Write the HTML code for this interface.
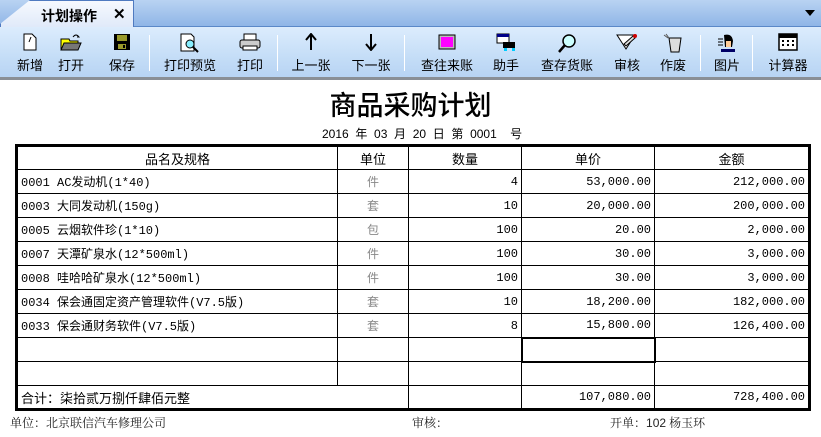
<!DOCTYPE html>
<html><head><meta charset="utf-8"><style>
*{margin:0;padding:0;box-sizing:border-box}
body{width:821px;height:437px;position:relative;background:#fff;overflow:hidden;font-family:"Liberation Sans","Noto Sans CJK SC",sans-serif}
.tabbar{position:absolute;left:0;top:0;width:821px;height:28px;background:linear-gradient(#b9d3f2,#8cb3e6)}
.tab{position:absolute;left:0;top:0;width:134px;height:28px;background:linear-gradient(#f6f9fe,#dfe9f9);border:1px solid #4f7ac0;border-bottom:none;clip-path:polygon(30px 0,100% 0,100% 100%,0 100%,0 24px)}
.tabline{position:absolute;left:133px;top:26px;width:688px;height:1px;background:#5b88c8}
.tabt{position:absolute;left:40px;top:5px;font-size:14px;font-weight:bold;color:#000}
.tabx{position:absolute;left:112px;top:4px;font-size:15px;font-weight:bold}
.tb{position:absolute;left:0;top:27px;width:821px;height:51px;background:linear-gradient(#dcecfd,#c4ddf7 60%,#b7d3f3)}
.tbb{position:absolute;left:0;top:77px;width:821px;height:3px;background:#8a8f96}
.it{position:absolute;top:55px;font-size:13px;color:#000;transform:translateX(-50%);white-space:nowrap}
.ic{position:absolute;top:33px;transform:translateX(-50%)}
.sep{position:absolute;top:35px;width:1px;height:36px;background:#8fb0d8;border-right:1px solid #fff}
.title{position:absolute;left:0;width:821px;top:84px;text-align:center;font-size:27px;font-weight:500;font-family:"Noto Sans CJK SC",sans-serif;color:#000}
.date{position:absolute;left:322px;top:125px;font-size:12px;word-spacing:0;white-space:pre}
table{position:absolute;left:15px;top:144px;border-collapse:collapse;border:3px solid #000;font-size:12px}
td{border:1px solid #000;height:24px;padding:0 3px;font-family:"Liberation Mono","Noto Sans CJK SC",monospace}
.h td{text-align:center;font-family:"Noto Sans CJK SC",sans-serif;font-size:13px}
.u{text-align:center;color:#888;font-family:"Noto Sans CJK SC",sans-serif!important}
.r{text-align:right}
.sel{border:2px solid #000}
.ft{position:absolute;top:414px;font-size:12px;color:#222;font-family:"Noto Serif CJK SC",serif}
</style></head><body>
<div class="tabbar"></div><div class="tabline"></div>
<div class="tab"><span class="tabt">计划操作</span><span class="tabx">✕</span></div>
<div style="position:absolute;left:805px;top:10px;width:0;height:0;border-left:5px solid transparent;border-right:5px solid transparent;border-top:6px solid #000"></div>
<div class="tb"></div><div class="tbb"></div>
<svg class="ic" style="left:30px" width="16" height="18"><path d="M2 1h8l4 4v12H2z" fill="#fff" stroke="#000"/><path d="M9 4l-2 5" stroke="#000"/></svg>
<svg class="ic" style="left:71px" width="22" height="18"><path d="M1 6h8l1 2h8v8H1z" fill="#ff0" stroke="#000"/><path d="M4 10h17l-3 7H1z" fill="#777" stroke="#000"/><path d="M13 4q3-4 6 0l-2 0" fill="none" stroke="#000"/></svg>
<svg class="ic" style="left:122px" width="18" height="18"><rect x="1" y="1" width="16" height="16" fill="#000"/><rect x="4" y="2" width="10" height="6" fill="#99992a"/><rect x="5" y="11" width="8" height="5" fill="#99992a"/><rect x="10" y="12" width="2" height="3" fill="#000"/></svg>
<div class="sep" style="left:149px"></div>
<svg class="ic" style="left:190px" width="20" height="20"><path d="M1 1h10l3 3v14H1z" fill="#fff" stroke="#000"/><circle cx="10" cy="11" r="4" fill="#8ef" stroke="#000"/><path d="M13 14l5 5" stroke="#000" stroke-width="2"/></svg>
<svg class="ic" style="left:250px" width="22" height="18"><rect x="5" y="1" width="12" height="6" fill="#fff" stroke="#000"/><rect x="1" y="7" width="20" height="8" rx="2" fill="#ccc" stroke="#000"/><rect x="4" y="13" width="14" height="4" fill="#fff" stroke="#000"/></svg>
<div class="sep" style="left:277px"></div>
<svg class="ic" style="left:311px" width="12" height="18"><path d="M6 2v15M1 7l5-6 5 6" fill="none" stroke="#000" stroke-width="2"/></svg>
<svg class="ic" style="left:371px" width="12" height="18"><path d="M6 1v15M1 11l5 6 5-6" fill="none" stroke="#000" stroke-width="2"/></svg>
<div class="sep" style="left:404px"></div>
<svg class="ic" style="left:447px" width="18" height="18"><rect x="1" y="2" width="16" height="14" fill="#bbb" stroke="#000"/><rect x="3" y="4" width="12" height="10" fill="#f0f"/></svg>
<svg class="ic" style="left:506px" width="20" height="18"><rect x="1" y="1" width="12" height="9" fill="#fff" stroke="#000"/><rect x="1" y="1" width="12" height="3" fill="#008"/><rect x="7" y="9" width="12" height="6" fill="#000"/><rect x="8" y="15" width="3" height="3" fill="#0cf"/><rect x="16" y="15" width="3" height="3" fill="#0cf"/></svg>
<svg class="ic" style="left:567px" width="20" height="20"><circle cx="12" cy="8" r="6" fill="#cff" stroke="#000" stroke-width="1.5"/><path d="M8 12l-6 7" stroke="#000" stroke-width="2.5"/></svg>
<svg class="ic" style="left:627px" width="22" height="18"><path d="M1 2h18l-9 14z" fill="#fff" stroke="#000"/><path d="M8 11l9-8 2 2-9 8z" fill="#ddd" stroke="#000"/><circle cx="19" cy="3" r="2" fill="#c00"/></svg>
<svg class="ic" style="left:673px" width="20" height="20"><path d="M6 5h12l-2 14H8z" fill="#ddd" stroke="#000"/><path d="M1 2l4 3M3 1l3 4" stroke="#555"/></svg>
<div class="sep" style="left:700px"></div>
<svg class="ic" style="left:727px" width="20" height="20"><path d="M7 2q8-2 9 6l-1 6h-7z" fill="#000"/><path d="M9 8h5v6H9z" fill="#fc9"/><rect x="4" y="16" width="14" height="3" fill="#006"/><path d="M1 6h5M1 9h5M1 12h5" stroke="#000"/></svg>
<div class="sep" style="left:752px"></div>
<svg class="ic" style="left:788px" width="20" height="18"><rect x="1" y="1" width="18" height="16" fill="#fff" stroke="#000" stroke-width="1.5"/><rect x="1" y="1" width="18" height="4" fill="#000"/><path d="M4 8h2M9 8h2M14 8h2M4 12h2M9 12h2M14 12h2" stroke="#000" stroke-width="2"/></svg>
<div class="it" style="left:30px">新增</div><div class="it" style="left:71px">打开</div><div class="it" style="left:122px">保存</div>
<div class="it" style="left:190px">打印预览</div><div class="it" style="left:250px">打印</div>
<div class="it" style="left:311px">上一张</div><div class="it" style="left:371px">下一张</div>
<div class="it" style="left:447px">查往来账</div><div class="it" style="left:506px">助手</div><div class="it" style="left:567px">查存货账</div>
<div class="it" style="left:627px">审核</div><div class="it" style="left:673px">作废</div><div class="it" style="left:727px">图片</div><div class="it" style="left:788px">计算器</div>
<div class="title">商品采购计划</div>
<div class="date">2016  年  03  月  20  日  第  0001    号</div>
<table>
<colgroup><col style="width:321px"><col style="width:71px"><col style="width:113px"><col style="width:133px"><col style="width:155px"></colgroup>
<tr class="h"><td>品名及规格</td><td>单位</td><td>数量</td><td>单价</td><td>金额</td></tr>
<tr><td>0001 AC发动机(1*40)</td><td class="u">件</td><td class="r">4</td><td class="r">53,000.00</td><td class="r">212,000.00</td></tr>
<tr><td>0003 大同发动机(150g)</td><td class="u">套</td><td class="r">10</td><td class="r">20,000.00</td><td class="r">200,000.00</td></tr>
<tr><td>0005 云烟软件珍(1*10)</td><td class="u">包</td><td class="r">100</td><td class="r">20.00</td><td class="r">2,000.00</td></tr>
<tr><td>0007 天潭矿泉水(12*500ml)</td><td class="u">件</td><td class="r">100</td><td class="r">30.00</td><td class="r">3,000.00</td></tr>
<tr><td>0008 哇哈哈矿泉水(12*500ml)</td><td class="u">件</td><td class="r">100</td><td class="r">30.00</td><td class="r">3,000.00</td></tr>
<tr><td>0034 保会通固定资产管理软件(V7.5版)</td><td class="u">套</td><td class="r">10</td><td class="r">18,200.00</td><td class="r">182,000.00</td></tr>
<tr><td>0033 保会通财务软件(V7.5版)</td><td class="u">套</td><td class="r">8</td><td class="r">15,800.00</td><td class="r">126,400.00</td></tr>
<tr><td></td><td></td><td></td><td class="sel"></td><td></td></tr>
<tr><td></td><td></td><td></td><td></td><td></td></tr>
<tr><td colspan="2" style="font-family:'Noto Sans CJK SC',sans-serif;font-size:13px">合计：柒拾贰万捌仟肆佰元整</td><td></td><td class="r">107,080.00</td><td class="r">728,400.00</td></tr>
</table>
<div class="ft" style="left:10px">单位：北京联信汽车修理公司</div>
<div class="ft" style="left:412px">审核：</div>
<div class="ft" style="left:610px">开单：<span style="font-family:'Liberation Sans'">102</span> 杨玉环</div>
</body></html>
